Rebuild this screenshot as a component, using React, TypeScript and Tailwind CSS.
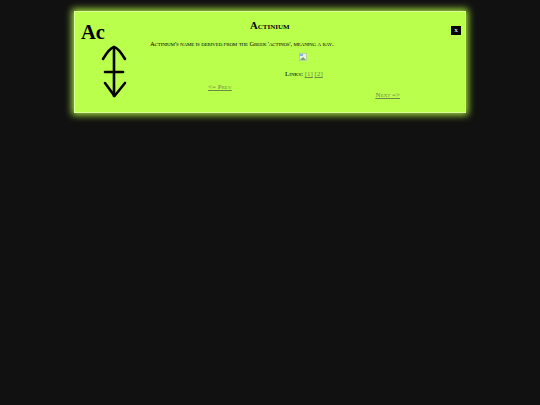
export default function App() {
  return (
    <div className="min-h-[405px] bg-[#111111] pt-[11px] font-['Liberation_Serif',serif] text-black">
      <div className="ml-[74px] flex h-[102px] w-[392px] border border-[#dcff9c] bg-[#bbff4d] shadow-[0_0_7px_2px_#a6e63e]">
        {/* Symbol column */}
        <div className="flex w-[75px] shrink-0 flex-col pl-[6px] pt-[8px]">
          <div className="text-[20.5px] font-bold leading-[24px]">Ac</div>
          <svg width="30" height="54" viewBox="0 0 30 54" fill="none" stroke="#000" strokeWidth="2.6" strokeLinecap="round" strokeLinejoin="round" className="ml-[19px] mt-[1px]">
            <path d="M3 14 C6 9 10 3 14 2 C18 3 22 9 25 14" />
            <path d="M14 2 V51" />
            <path d="M5 27 H23" />
            <path d="M5 38 L14.5 51 L25 38" />
          </svg>
        </div>
        {/* Text column */}
        <div className="flex min-w-0 flex-1 flex-col">
          <div className="h-[27px]">
            <h1 className="ml-[100px] mt-[6px] text-[10.7px] font-bold leading-[14px] [font-variant:small-caps]">Actinium</h1>
          </div>
          <p className="h-[13px] whitespace-nowrap text-[6.5px] leading-[10px] tracking-[-0.15px] [font-variant:small-caps]">
            Actinium's name is derived from the Greek 'actinos', meaning a ray.
          </p>
          <svg width="8" height="8" viewBox="0 0 8 8" className="ml-[149px] mt-[1px]">
            <rect x="0.5" y="0.5" width="7" height="7" fill="#e8f0e8" stroke="#a8b8a8" strokeWidth="0.6" />
            <path d="M1 7 L4 4 L7 7Z" fill="#6aa86a" />
            <path d="M1 1 H4 V3 H1Z" fill="#8ab0e8" />
          </svg>
          <div className="ml-[135px] mt-[8px] whitespace-nowrap text-[7px] leading-[10px] [font-variant:small-caps]">
            Links: <a className="text-[#6b8a45] underline">[1]</a> <a className="text-[#6b8a45] underline">[2]</a>
          </div>
          <div className="mt-[3px] flex justify-between pl-[58px] pr-[51px] text-[7px] leading-[10px] text-[#6b8a45] underline [font-variant:small-caps]">
            <a>{"<= Prev"}</a>
            <a className="mt-[8px]">{"Next =>"}</a>
          </div>
        </div>
        <div className="shrink-0 pr-[4px] pt-[14px]">
          <button className="flex h-[9px] w-[10px] items-center justify-center bg-black text-[5px] font-bold leading-none text-white">X</button>
        </div>
      </div>
    </div>
  )
}
